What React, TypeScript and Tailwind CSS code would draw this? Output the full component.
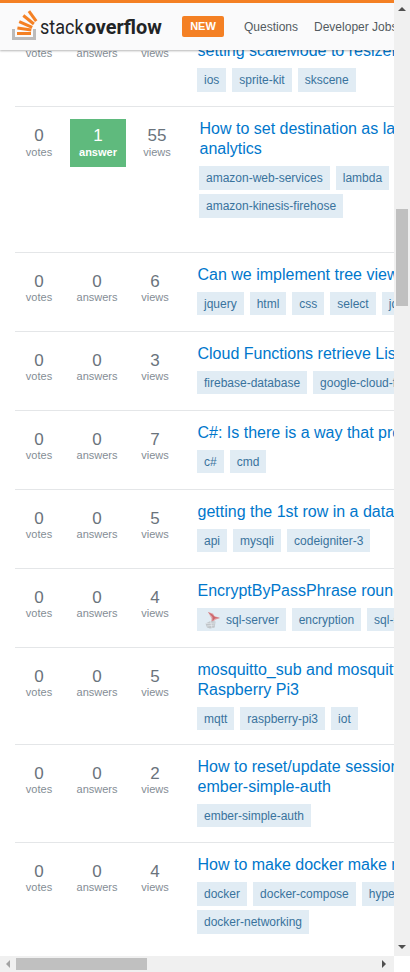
import React from "react";

type Question = {
  title: string[];
  tags: string[][];
  views: number;
  answered?: boolean;
  height: string;
  tagHeight?: string;
};

const questions: Question[] = [
  { title: ["", "setting scaleMode to resizeFill"], tags: [["ios", "sprite-kit", "skscene"]], views: 5, height: "h-[98px]", tagHeight: "h-6" },
  { title: ["How to set destination as lambda in", "analytics"], tags: [["amazon-web-services", "lambda"], ["amazon-kinesis-firehose"]], views: 55, answered: true, height: "h-[146px]", tagHeight: "h-6" },
  { title: ["Can we implement tree view in"], tags: [["jquery", "html", "css", "select", "jquery-ui"]], views: 6, height: "h-[79px]" },
  { title: ["Cloud Functions retrieve List"], tags: [["firebase-database", "google-cloud-functions"]], views: 3, height: "h-[79px]" },
  { title: ["C#: Is there is a way that process"], tags: [["c#", "cmd"]], views: 7, height: "h-[79px]" },
  { title: ["getting the 1st row in a database"], tags: [["api", "mysqli", "codeigniter-3"]], views: 5, height: "h-[79px]" },
  { title: ["EncryptByPassPhrase round"], tags: [["sql-server", "encryption", "sql-server-2012"]], views: 4, height: "h-[79px]" },
  { title: ["mosquitto_sub and mosquitto_pub", "Raspberry Pi3"], tags: [["mqtt", "raspberry-pi3", "iot"]], views: 5, height: "h-[97px]" },
  { title: ["How to reset/update session", "ember-simple-auth"], tags: [["ember-simple-auth"]], views: 2, height: "h-[98px]" },
  { title: ["How to make docker make request"], tags: [["docker", "docker-compose", "hyperledger"], ["docker-networking"]], views: 4, height: "h-[114px]", tagHeight: "h-6" },
];

function Logo() {
  return (
    <svg width="154" height="39" viewBox="0 0 154 39" className="ml-[10px] shrink-0" aria-label="stack overflow">
      <path d="M3.5 22v9.500h21V22" fill="none" stroke="#bcbbbb" strokeWidth="3" />
      <g stroke="#f48024" strokeWidth="3">
        <path d="M7 26.500h14" />
        <path d="M7.400 20.900l13.900 2" />
        <path d="M9.200 14.600l13 5.700" />
        <path d="M13.300 8.500l10.600 8.500" />
        <path d="M18.900 4.200l7.300 10" />
      </g>
      <text x="30" y="27" fontSize="20.500" fontFamily="Roboto, sans-serif" fill="#222426" textLength="43.500" lengthAdjust="spacingAndGlyphs">stack</text>
      <text x="74.800" y="27" fontSize="20.500" fontWeight="700" fontFamily="Roboto, sans-serif" fill="#222426" textLength="77" lengthAdjust="spacingAndGlyphs">overflow</text>
    </svg>
  );
}

function SqlIcon() {
  return (
    <svg width="16" height="18" viewBox="0 0 16 18" className="mr-[5px] ml-px shrink-0">
      <path d="M3 1l5 1.500 1.500 2.500 5.500 2-4 1.500-5 3.500.5-4.500z" fill="#e0a9ac" />
      <path d="M3 1l4.500 2.500L10 6l5 1-5 .5-2.500 2.500V6z" fill="#cc666c" />
      <path d="M.5 12.500L5.500 10l5 .5-.8 6L5 17.500l-3-1z" fill="#c0c5c9" />
      <path d="M.5 12.500l9.500-.5M2 15l7.500-1M5.500 10l1.500 7" stroke="#e6ebef" strokeWidth=".7" />
    </svg>
  );
}

function Stat({ value, label, labelLine }: { value: number; label: string; labelLine: string }) {
  return (
    <div className="w-[58px] shrink-0 pt-2 text-center text-[#6a737c]">
      <div className="text-[17px] leading-[18px]">{value}</div>
      <div className={`text-[11px] text-[#848d95] ${labelLine}`}>{label}</div>
    </div>
  );
}

function QuestionRow({ q }: { q: Question }) {
  const labelLine = q.answered ? "leading-[14px]" : "leading-[12px]";
  return (
    <div className={`ml-[15px] flex shrink-0 overflow-hidden border-t border-[#e4e6e8] ${q.height}`}>
      <div className={`-ml-[5px] flex shrink-0 pt-3 ${q.answered ? "w-[189px]" : "w-[187px]"}`}>
        <Stat value={0} label="votes" labelLine={labelLine} />
        {q.answered ? (
          <div className="mr-[2px] ml-[2px] h-12 w-14 shrink-0 bg-[#5fba7d] pt-2 text-center text-white">
            <div className="text-[17px] leading-[18px]">1</div>
            <div className="text-[11px] leading-[14px] font-bold">answer</div>
          </div>
        ) : (
          <Stat value={0} label="answers" labelLine={labelLine} />
        )}
        <Stat value={q.views} label="views" labelLine={labelLine} />
      </div>
      <div className="shrink-0 pt-3">
        {q.title.map((line) => (
          <div key={line} className="h-5 pl-[0.5px] text-[16px] leading-5 whitespace-nowrap text-[#0077cc]">{line}</div>
        ))}
        <div className="mt-[7px] flex flex-col gap-1">
          {q.tags.map((row) => (
            <div key={row[0]} className="flex gap-[6px]">
              {row.map((tag) => (
                <span key={tag} className={`flex items-center bg-[#e1ecf4] px-[7px] text-[12px] leading-6 whitespace-nowrap text-[#39739d] ${q.tagHeight ?? "h-[23px]"}`}>
                  {tag === "sql-server" && <SqlIcon />}
                  {tag}
                </span>
              ))}
            </div>
          ))}
        </div>
      </div>
    </div>
  );
}

export default function App() {
  return (
    <div className="flex h-[972px] w-[410px] flex-col overflow-hidden bg-white font-['Liberation_Sans',Arial,sans-serif]">
      <div className="flex h-[956px]">
        <div className="flex w-[394px] flex-col overflow-hidden">
          <header className="relative z-10 flex h-[50px] shrink-0 items-center border-t-[3px] border-[#f48024] bg-[#fafafb] shadow-[0_1px_2px_rgba(12,13,14,0.3)]">
            <Logo />
            <span className="ml-[18px] flex h-[21px] w-[42px] shrink-0 items-center justify-center rounded-[2px] bg-[#f48024] text-[11px] font-bold text-white">NEW</span>
            <nav className="ml-5 flex shrink-0 gap-4 text-[12px] whitespace-nowrap text-[#535a60]">
              <span>Questions</span>
              <span>Developer Jobs</span>
            </nav>
          </header>
          <main className="-mt-[42px] flex flex-col">
            {questions.map((q) => <QuestionRow key={q.tags[0][0]} q={q} />)}
          </main>
        </div>
        <div className="flex w-4 shrink-0 flex-col items-center bg-[#f0f0f0]">
          <svg width="16" height="209" className="shrink-0"><path d="M4 11l4-4 4 4z" fill="#505050" /></svg>
          <div className="h-[97px] w-3 bg-[#c0c0c0]" />
          <svg width="16" height="16" className="mt-auto"><path d="M4 5l4 4 4-4z" fill="#505050" /></svg>
        </div>
      </div>
      <div className="flex h-4 w-[394px] items-center bg-[#f0f0f0]">
        <svg width="16" height="16"><path d="M10 4l-4 4 4 4z" fill="#a3a3a3" /></svg>
        <div className="h-3 w-[131px] bg-[#c0c0c0]" />
        <svg width="16" height="16" className="ml-auto"><path d="M4 4l4 4-4 4z" fill="#505050" /></svg>
      </div>
    </div>
  );
}
